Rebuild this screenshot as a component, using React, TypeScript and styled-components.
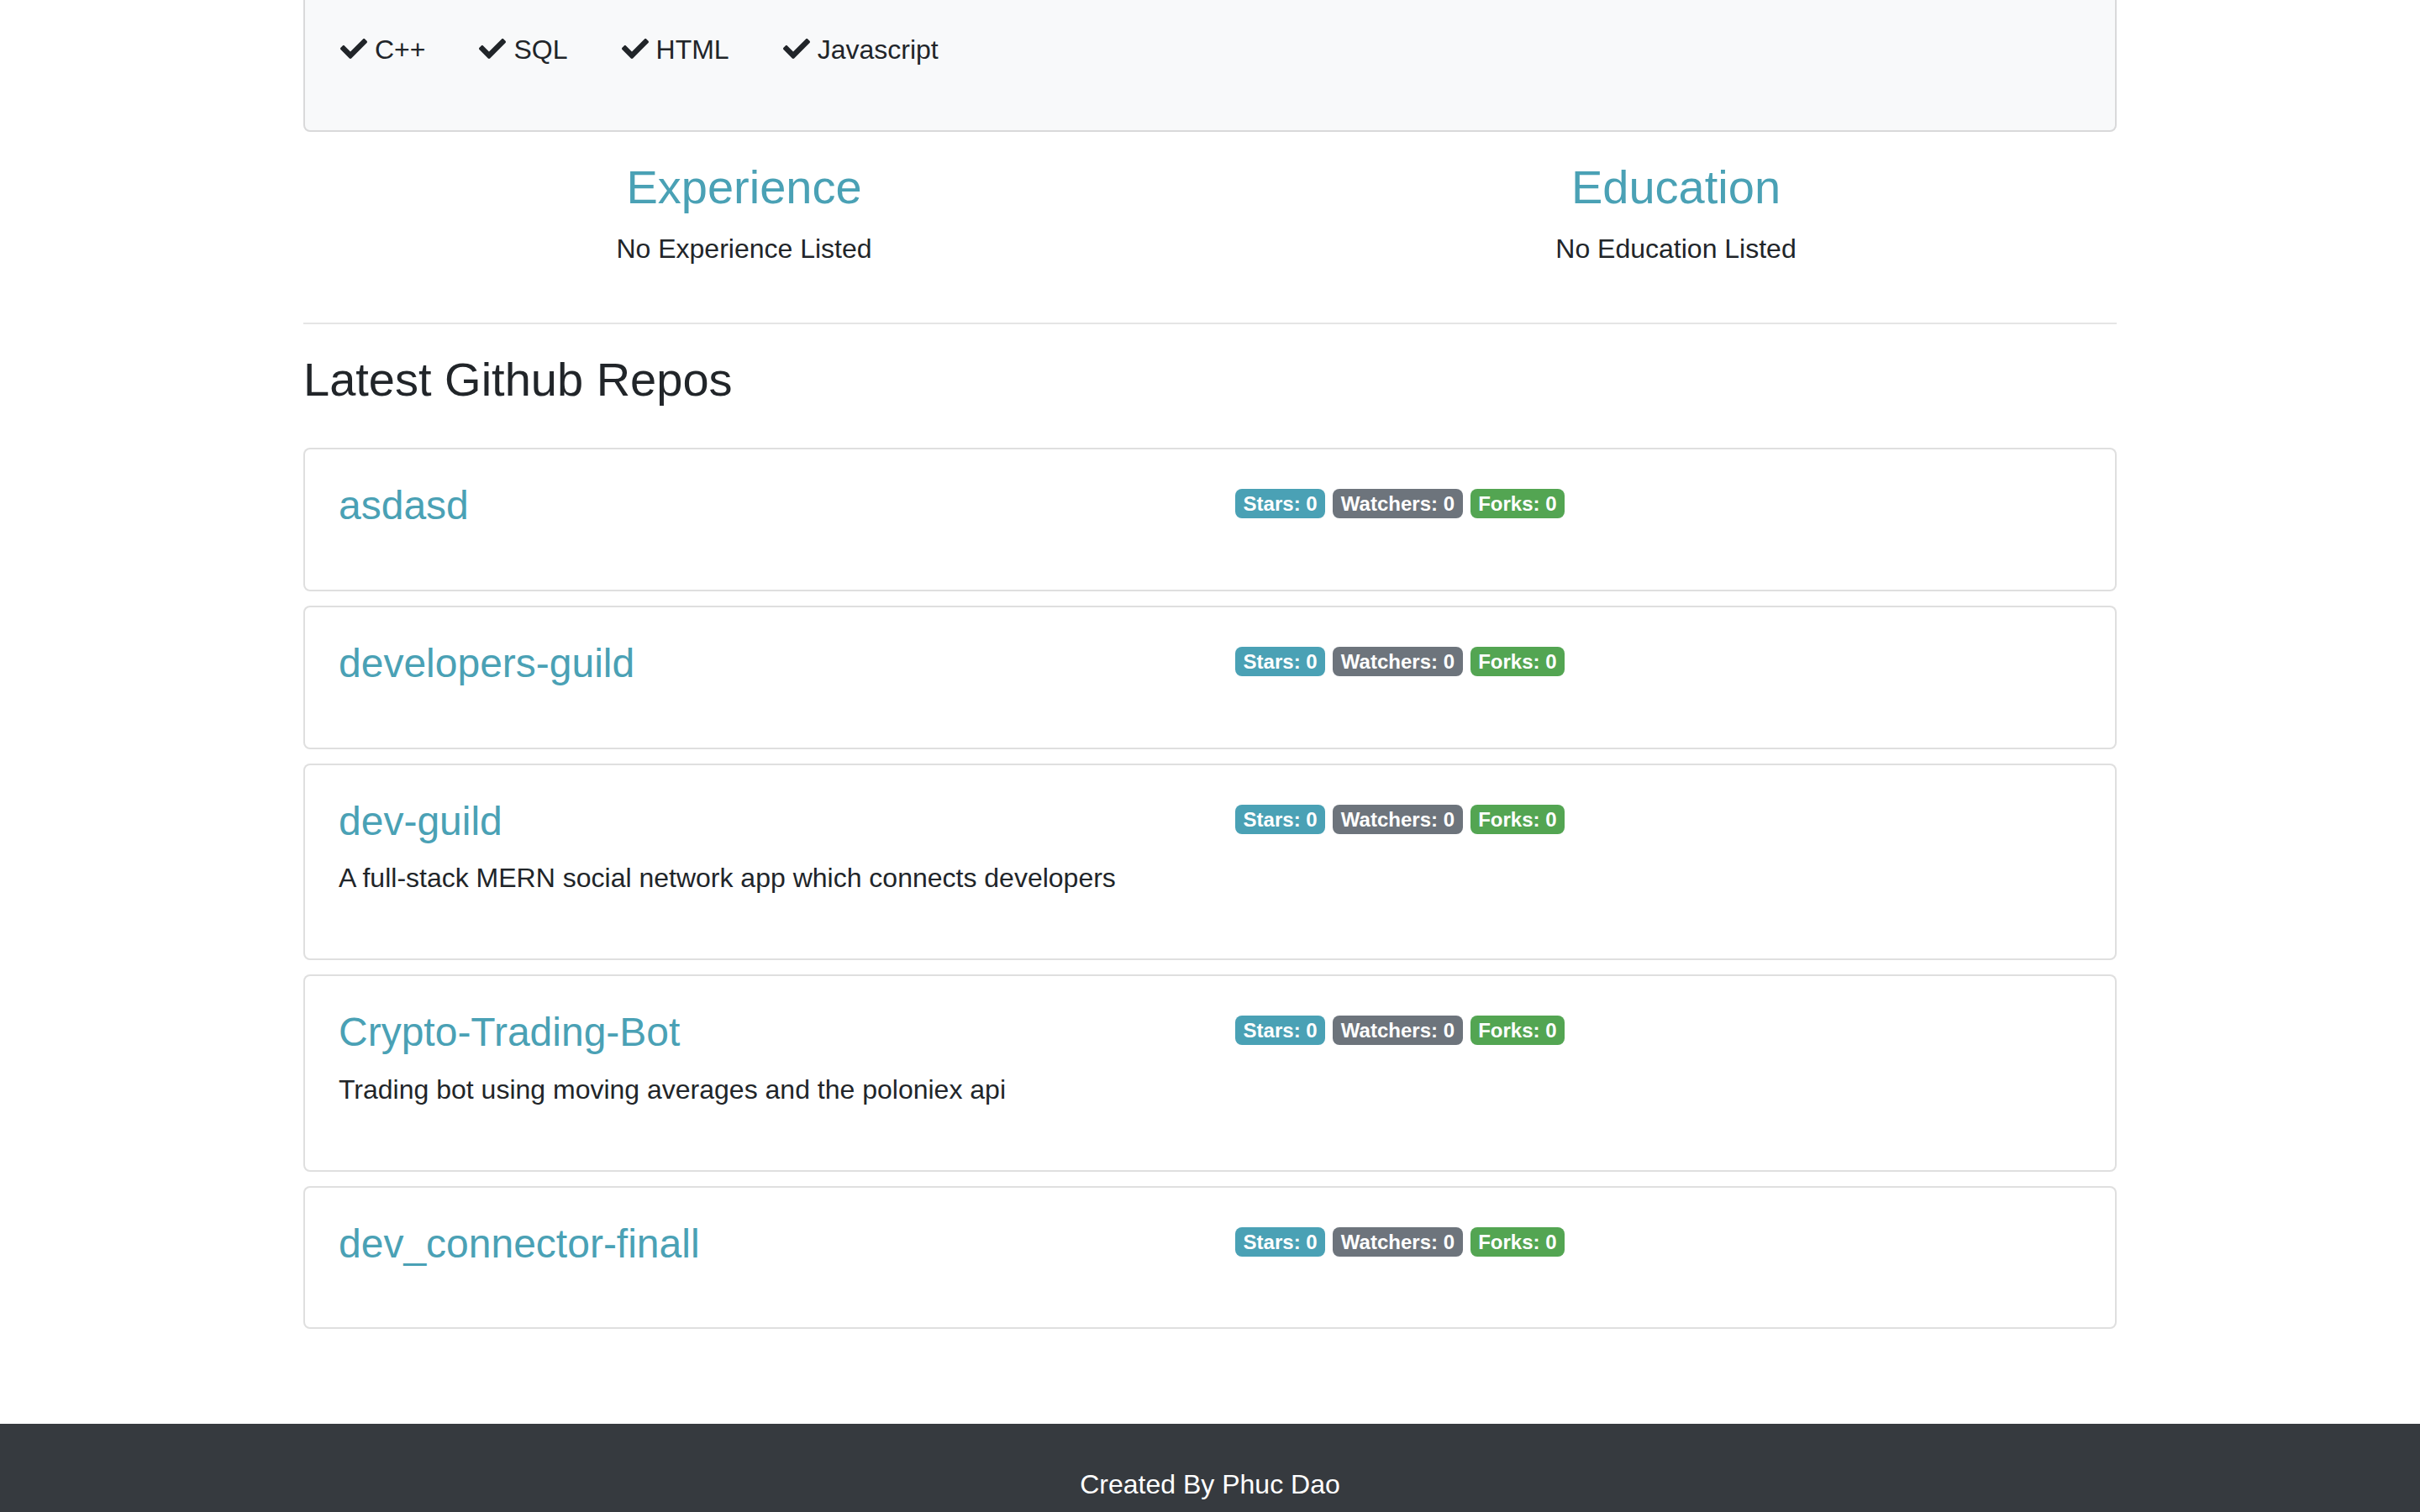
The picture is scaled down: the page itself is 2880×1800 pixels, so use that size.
import React from 'react'
import styled, { createGlobalStyle } from 'styled-components'
import { FaCheck } from 'react-icons/fa'

const GlobalStyle = createGlobalStyle`
  * {
    box-sizing: border-box;
  }
  html,
  body {
    margin: 0;
    padding: 0;
    background: #ffffff;
  }
  body {
    font-family: 'Liberation Sans', Arial, Helvetica, sans-serif;
    font-size: 32px;
    line-height: 1.5;
    color: #212529;
  }
`

const colors = {
  info: '#4aa1b5',
  secondary: '#6d747c',
  success: '#53a552',
  dark: '#363a3f',
  border: 'rgba(0, 0, 0, 0.125)'
}

const Container = styled.div`
  display: flow-root;
  width: 2158px;
  margin: 0 auto;
`

const SkillCard = styled.div`
  margin-top: -39px;
  margin-bottom: 32px;
  padding: 40px;
  background: #f8f9fa;
  border: 2px solid ${colors.border};
  border-radius: 8px;
`

const SkillList = styled.div`
  display: flex;
  flex-wrap: wrap;
  margin: 0 -30px;
`

const SkillItem = styled.div`
  padding: 32px;

  svg {
    width: 32px;
    height: 32px;
    vertical-align: -4px;
    margin-right: 9px;
  }
`

const Row = styled.div`
  display: flex;
  margin: 0 -30px;
`

const HalfCol = styled.div<{ $center?: boolean }>`
  flex: 0 0 50%;
  max-width: 50%;
  padding: 0 30px;
  text-align: ${({ $center }) => ($center ? 'center' : 'left')};
`

const SectionTitle = styled.h3`
  margin: 0 0 16px;
  font-size: 56px;
  font-weight: 400;
  line-height: 1.2;
  color: ${colors.info};
`

const Text = styled.p`
  margin: 0 0 32px;
`

const Divider = styled.hr`
  margin: 32px 0;
  border: 0;
  border-top: 2px solid rgba(0, 0, 0, 0.1);
`

const ReposTitle = styled.h3`
  margin: 0 0 48px;
  font-size: 56px;
  font-weight: 400;
  line-height: 1.2;
`

const RepoCard = styled.div`
  margin-bottom: 17px;
  padding: 40px;
  border: 2px solid ${colors.border};
  border-radius: 8px;
  background: #ffffff;
`

const RepoName = styled.h4`
  margin: 0 0 16px;
  font-size: 48px;
  font-weight: 400;
  line-height: 54.6px;

  a {
    color: ${colors.info};
    text-decoration: none;
  }
`

type BadgeKind = 'info' | 'secondary' | 'success'

const Badge = styled.span<{ $kind: BadgeKind }>`
  display: inline-block;
  margin-right: 9px;
  padding: 6px 9.6px 5px;
  font-size: 24px;
  font-weight: 700;
  line-height: 1;
  white-space: nowrap;
  vertical-align: 2px;
  color: #ffffff;
  background: ${({ $kind }) => colors[$kind]};
  border-radius: 8px;
`

const Footer = styled.footer`
  margin-top: 96px;
  padding: 48px;
  background: ${colors.dark};
  color: #ffffff;
  text-align: center;
`

const skills = ['C++', 'SQL', 'HTML', 'Javascript']

const repos = [
  { name: 'asdasd', description: '' },
  { name: 'developers-guild', description: '' },
  {
    name: 'dev-guild',
    description: 'A full-stack MERN social network app which connects developers'
  },
  {
    name: 'Crypto-Trading-Bot',
    description: 'Trading bot using moving averages and the poloniex api'
  },
  { name: 'dev_connector-finall', description: '' }
]

export default function App() {
  return (
    <>
      <GlobalStyle />
      <Container>
        <SkillCard>
          <SkillList>
            {skills.map(skill => (
              <SkillItem key={skill}>
                <FaCheck />
                {skill}
              </SkillItem>
            ))}
          </SkillList>
        </SkillCard>

        <Row>
          <HalfCol $center>
            <SectionTitle>Experience</SectionTitle>
            <Text>No Experience Listed</Text>
          </HalfCol>
          <HalfCol $center>
            <SectionTitle>Education</SectionTitle>
            <Text>No Education Listed</Text>
          </HalfCol>
        </Row>

        <Divider />

        <ReposTitle>Latest Github Repos</ReposTitle>
        {repos.map(repo => (
          <RepoCard key={repo.name}>
            <Row>
              <HalfCol>
                <RepoName>
                  <a href="#">{repo.name}</a>
                </RepoName>
                <Text>{repo.description}</Text>
              </HalfCol>
              <HalfCol>
                <Badge $kind="info">Stars: 0</Badge>
                <Badge $kind="secondary">Watchers: 0</Badge>
                <Badge $kind="success">Forks: 0</Badge>
              </HalfCol>
            </Row>
          </RepoCard>
        ))}
      </Container>
      <Footer>Created By Phuc Dao</Footer>
    </>
  )
}
